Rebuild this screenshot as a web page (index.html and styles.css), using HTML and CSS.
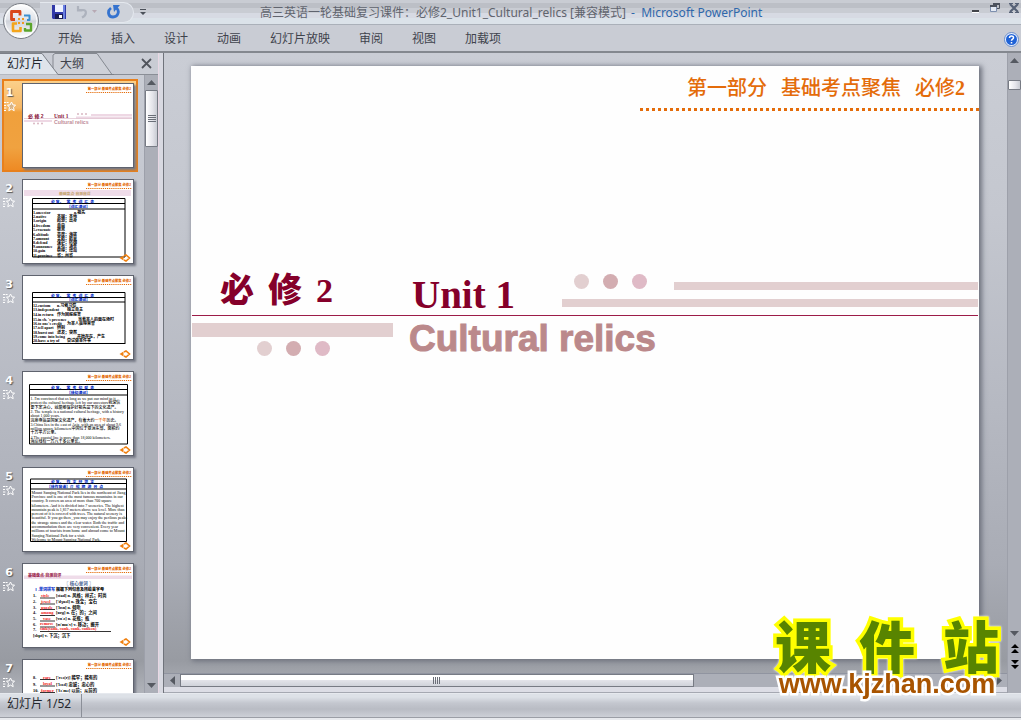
FILE: index.html
```html
<!DOCTYPE html>
<html lang="zh-CN">
<head>
<meta charset="utf-8">
<title>高三英语一轮基础复习课件 - Microsoft PowerPoint</title>
<link rel="stylesheet" href="styles.css">
</head>
<body>
<svg class="defs" width="0" height="0" aria-hidden="true">
  <defs>
    <symbol id="slide-head" viewBox="0 0 110 83" overflow="visible">
      <text x="108" y="5.6" text-anchor="end" font-size="3.3" font-weight="900" fill="#e46c0a">第一部分 基础考点聚焦 必修2</text>
      <path d="M63 8.5H109" stroke="#e46c0a" stroke-width="1.2" stroke-dasharray="1.2 .9"/>
    </symbol>
    <symbol id="slide-nav" viewBox="0 0 12 8">
      <path d="M4.500 1.500V6.500L.5 4z" fill="#f08010"/>
      <path d="M5 2 7 1l3.500 3L7 7 5 6" fill="none" stroke="#f08010" stroke-width="1.600"/>
    </symbol>
    <symbol id="anim-star" viewBox="0 0 12 11">
      <path d="M7.500 1 9 4h2.500L9.500 6.300l.7 3.400-2.700-1.600-2.700 1.600.7-3.400-2-2.300H6z" fill="#a9adb7" fill-opacity=".4" stroke="#fff"/>
      <path d="M0 1.500h5M0 4.500h2.500M0 7h3M0 9.500h2.500" stroke="#fff" stroke-dasharray="2 .6"/>
    </symbol>
  </defs>
</svg>

<div class="app">
  <header class="titlebar">
    <div class="qat">
      <button aria-label="保存"><svg width="14" height="14" viewBox="0 0 14 14"><path d="M0 0h14v14H1l-1-1z" fill="#3038a8"/><path d="M3 0h8v7H3z" fill="#eef2ff"/><path d="M11 0h2v14h-2z" fill="#6a80e0"/><path d="M3 9h8v5H3z" fill="#181c50"/><path d="M7 10h3v3H7z" fill="#fff"/></svg></button>
      <button aria-label="撤消"><svg width="23" height="14" viewBox="0 0 23 14"><path d="M2 5h6c4 0 4 5-1 7.500M3 1v4.500h4.500" fill="none" stroke="#adb2bd" stroke-width="2.200"/><path d="M17 5h5l-2.500 3z" fill="#b8a9b4"/></svg></button>
      <button aria-label="重复"><svg width="14" height="14" viewBox="0 0 14 14"><path d="M4 3C0 6 1 12 6 12s7-6 3.500-9" fill="none" stroke="#3573cf" stroke-width="2.800"/><path d="M6 0h7L7 7z" fill="#3573cf"/></svg></button>
    </div>
    <button class="qat-more" aria-label="自定义快速访问工具栏"><svg width="6" height="6" viewBox="0 0 6 6"><path d="M0 0h6v1H0zM0 3h6L3 6z" fill="#4c515a"/></svg></button>
    <h1 class="title">高三英语一轮基础复习课件：必修2_Unit1_Cultural_relics [兼容模式] <span class="app-name">- &nbsp;Microsoft PowerPoint</span></h1>
    <div class="window-buttons">
      <button aria-label="最小化"><svg width="8" height="10" viewBox="0 0 8 10"><path d="M0 7h7v2H0z" fill="#42444a"/><path d="M0 9h7v1H0z" fill="#fff"/></svg></button>
      <button aria-label="还原"><svg width="10" height="10" viewBox="0 0 10 10"><path d="M3.500 3V.5h6v5H7" fill="none" stroke="#4c525e"/><path d="M3 0h7v2H3zM0 2h7v2H0z" fill="#4c525e"/><path d="M.5 4v4.500h6V4" fill="#e4eaf4" stroke="#7d8fae"/></svg></button>
      <button aria-label="关闭"><svg width="10" height="10" viewBox="0 0 10 10"><path d="m1 1 8 8M9 1 1 9" stroke="#566176" stroke-width="2.200"/><path d="M0 .5h4M6 .5h4M0 9.500h4M6 9.500h4" stroke="#566176"/></svg></button>
    </div>
  </header>
  <button class="office" aria-label="Office 按钮"><svg viewBox="0 0 38 38" width="38" height="38">
    <defs><linearGradient id="orb" x2="0" y2="1"><stop offset="0" stop-color="#fff"/><stop offset=".45" stop-color="#e1e4ea"/><stop offset=".5" stop-color="#cfd3da"/><stop offset="1" stop-color="#fff"/></linearGradient></defs>
    <circle cx="19" cy="19" r="17.500" fill="url(#orb)" stroke="#777b83"/><circle cx="19" cy="19" r="16" fill="none" stroke="#fff"/>
    <g fill="none" stroke-linejoin="round"><path d="M13 17.500H9.500V9.500H18v4" stroke="#d9481c" stroke-width="2.800"/><path d="M22 13.500h5.500V18H25" stroke="#3c8fd0" stroke-width="2"/><path d="M15 21.500h-4V29h7.500v-4" stroke="#f4a51c" stroke-width="2.600"/><path d="M24 22h5v6.500h-6V26" stroke="#5ba52c" stroke-width="2.400"/></g>
    <g fill="#f19a20"><path d="M16 16h2v2h-2zM20 16h2v2h-2zM16 20h2v2h-2zM20 20h2v2h-2z"/></g></svg></button>

  <nav class="ribbon">
    <button>开始</button><button>插入</button><button>设计</button><button>动画</button><button>幻灯片放映</button><button>审阅</button><button>视图</button><button>加载项</button>
    <button class="help" aria-label="帮助"><svg width="15" height="15" viewBox="0 0 15 15"><circle cx="7.500" cy="7.500" r="7" fill="#e6efff" stroke="#6a8cc8"/><circle cx="7.500" cy="7.500" r="5.500" fill="#1f62d6"/><path d="M5.500 6c0-2.600 4-2.600 4-.3 0 1.500-2 1.400-2 3M7.500 10v1.500" fill="none" stroke="#fff" stroke-width="1.500"/></svg></button>
  </nav>

  <div class="work">
    <aside class="pane">
      <div class="pane-tabs">
        <svg class="tab-shape" width="114" height="22" viewBox="0 0 114 22" aria-hidden="true"><path d="M53 21V2l2-1.500h42L112 21.500" fill="#ced1d8" stroke="#858991"/><path d="M0 .5h42L58 21.500H0z" fill="#dfe4eb"/><path d="M0 .5h42L58 21.500h56" fill="none" stroke="#7c8088"/></svg>
        <button class="tab active">幻灯片</button><button class="tab">大纲</button>
        <button class="pane-close" aria-label="关闭窗格"><svg width="11" height="11" viewBox="0 0 11 11"><path d="m1 1 9 9M10 1l-9 9" stroke="#50545c" stroke-width="1.800"/></svg></button>
      </div>
      <div class="pane-body">
        <ol class="thumbs">
          <li class="item selected"><div class="label"><b>1</b><svg width="12" height="11"><use href="#anim-star"/></svg></div>
            <svg class="thumb" viewBox="0 0 110 83"><use href="#slide-head" width="110" height="83"/>
              <g fill="#eed8e4"><path d="M68 30h41v2H68zM53 32.500h56v2H53zM1 36h28v2H1z"/></g>
              <path d="M1 34.500h108" stroke="#d9b3c4" stroke-width=".6"/>
              <text x="5" y="33.500" font-size="5" font-weight="900" fill="#8b1a3c">必 修 2</text>
              <text class="serif" x="31" y="33.500" font-size="5.500" font-weight="700" fill="#8b1a3c">Unit 1</text>
              <text x="31" y="40" font-size="5.200" font-weight="700" fill="#c08c98">Cultural relics</text>
              <g fill="#d9b7c2"><circle cx="55" cy="30" r="1"/><circle cx="59" cy="30" r="1"/><circle cx="63" cy="30" r="1"/><circle cx="11" cy="39.500" r="1"/><circle cx="15" cy="39.500" r="1"/><circle cx="19" cy="39.500" r="1"/></g>
            </svg></li>
          <li class="item"><div class="label"><b>2</b><svg width="12" height="11"><use href="#anim-star"/></svg></div>
            <svg class="thumb" viewBox="0 0 110 83"><use href="#slide-head" width="110" height="83"/>
              <path d="M1 10h107v6H1z" fill="#efdce9"/><text x="36" y="14.500" font-size="3.800" font-weight="900" fill="#c8a878">基础盘点·自测自评</text>
              <path d="M9.500 18.500h92.500v58.500H9.500zM9.500 23.500H102M9.500 29H102" fill="none" stroke="#000"/>
              <g font-weight="900" fill="#0a32c8"><text x="28" y="22.500" font-size="3.800">必 背、&#160; &#160;常 &#160;考 &#160;词 &#160;汇 &#160;表</text><text x="44" y="27.800" font-size="3.800">【词汇速记】</text></g>
              <g class="rows" font-size="4">
                <text x="10" y="33.500">1.ancestor</text><text x="51" y="33.500">n.祖先</text>
                <text x="10" y="37.500">2.native</text><text x="34" y="37.500">本国；本地</text>
                <text x="10" y="41.500">3.origin</text><text x="34" y="41.500">起源；出身</text>
                <text x="10" y="46.500">4.freedom</text><text x="34" y="46.500">自由</text>
                <text x="10" y="50.500">5.evacuate</text><text x="34" y="50.500">撤离</text>
                <text x="10" y="55.500">6.altitude</text><text x="34" y="55.500">高度；海拔</text>
                <text x="10" y="59.500">7.amount</text><text x="34" y="59.500">总数；数量</text>
                <text x="10" y="63.500">8.defend</text><text x="34" y="63.500">保护；防御</text>
                <text x="10" y="68">9.announce</text><text x="34" y="68">宣布；通告</text>
                <text x="10" y="72">10.gain</text><text x="34" y="72">获得；增加</text>
                <text x="10" y="76.500">11.province</text><text x="34" y="76.500">省；州省</text>
              </g><use href="#slide-nav" x="96" y="74" width="12" height="8"/>
            </svg></li>
          <li class="item"><div class="label"><b>3</b><svg width="12" height="11"><use href="#anim-star"/></svg></div>
            <svg class="thumb" viewBox="0 0 110 83"><use href="#slide-head" width="110" height="83"/>
              <path d="M9.500 16.500h92.500V68M9.500 16.500V68M9 67.500h93M9.500 21.500H102M9.500 26H102" fill="none" stroke="#000"/>
              <g font-weight="900" fill="#0a32c8"><text x="28" y="20.500" font-size="3.800">必 背、&#160; &#160;常 &#160;考 &#160;词 &#160;汇 &#160;表</text><text x="44" y="25.200" font-size="3.800">【词汇速记】</text></g>
              <g class="rows" font-size="4">
                <text x="10" y="31">12.custom</text><text x="34" y="31">n.习俗习惯</text>
                <text x="10" y="35">13.independent</text><text x="44" y="35">独立自主</text>
                <text x="10" y="39.500">14.in return</text><text x="34" y="39.500">作为回报报答</text>
                <text x="10" y="44.500">15.in sb. 's presence</text><text x="55" y="44.500">当着某人的面在场时</text>
                <text x="10" y="48.500">16.to one's credit</text><text x="44" y="48.500">为某人赢得荣誉</text>
                <text x="10" y="53">17.tell apart</text><text x="34" y="53">辨别</text>
                <text x="10" y="57.500">18.burst out</text><text x="34" y="57.500">迸发；突然</text>
                <text x="10" y="61.500">19.come into being</text><text x="54" y="61.500">开始存在，产生</text>
                <text x="10" y="66">20.have a try of</text><text x="44" y="66">尝试做某件事</text>
              </g><use href="#slide-nav" x="96" y="74" width="12" height="8"/>
            </svg></li>
          <li class="item"><div class="label"><b>4</b><svg width="12" height="11"><use href="#anim-star"/></svg></div>
            <svg class="thumb" viewBox="0 0 110 83"><use href="#slide-head" width="110" height="83"/>
              <path d="M6.500 12.500h98v59.500h-98zM6.500 17.500h98M6.500 23h98" fill="none" stroke="#000"/>
              <g font-weight="900" fill="#0a32c8"><text x="28" y="16.500" font-size="3.800">必 背、&#160; &#160;常 &#160;考 &#160;句 &#160;型 &#160;表</text><text x="44" y="21.800" font-size="3.800">【佳句速记】</text></g>
              <g class="rows prose" font-size="4">
                <text x="7.500" y="28">1. I'm convinced that as long as we put our mind to it,</text>
                <text x="7.500" y="32">protect the cultural heritage left by our ancestors我深信</text>
                <text x="7.500" y="36.500">要下定决心，就能够保护好祖先留下的文化遗产。</text>
                <text x="7.500" y="41">2. The temple is a national cultural heritage, with a history</text>
                <text x="7.500" y="45">about 1,000 years.</text>
                <text x="7.500" y="49.500">这座寺庙是国家文化遗产，有着大约<tspan fill="#e46c0a">一千年</tspan>历史。</text>
                <text x="7.500" y="53.500">3.China lies in the east of Asia, with an area of about 9.6</text>
                <text x="7.500" y="57.500">million square kilometers中国位于亚洲东部，面积约</text>
                <text x="7.500" y="62">十万平方公里。</text>
                <text x="7.500" y="66.500">4.The coastal line is more than 18,000 kilometers.</text>
                <text x="7.500" y="71">海岸线有一万八千多公里长。</text>
              </g><use href="#slide-nav" x="96" y="74" width="12" height="8"/>
            </svg></li>
          <li class="item"><div class="label"><b>5</b><svg width="12" height="11"><use href="#anim-star"/></svg></div>
            <svg class="thumb" viewBox="0 0 110 83"><use href="#slide-head" width="110" height="83"/>
              <path d="M7.500 11h96v62.500h-96zM7.500 15.500h96M7.500 21h96" fill="none" stroke="#000"/>
              <g font-weight="900" fill="#0a32c8"><text x="28" y="14.800" font-size="3.800">必 背、&#160; &#160;作 &#160;文 &#160;好 &#160;范 &#160;文</text><text x="24" y="20" font-size="3.800">【佳作背诵】介 &#160;绍 &#160;旅 &#160;游 &#160;景 &#160;点</text></g>
              <g class="rows prose" font-size="4">
                <text x="8.500" y="25.500">Mount Sanqing National Park lies in the northeast of Jiang</text>
                <text x="8.500" y="29.500">Province and is one of the most famous mountains in our</text>
                <text x="8.500" y="33.500">country. It covers an area of more than 700 square</text>
                <text x="8.500" y="38.500">kilometers. And it is divided into 7 sceneries. The highest</text>
                <text x="8.500" y="42.500">mountain peak is 1,817 meters above sea level. More than</text>
                <text x="8.500" y="47">percent of it is covered with trees. The natural scenery is</text>
                <text x="8.500" y="51">beautiful. If you go there, you may enjoy the perilous peaks</text>
                <text x="8.500" y="55.500">the strange stones and the clear water. Both the traffic and</text>
                <text x="8.500" y="60">accommodation there are very convenient. Every year</text>
                <text x="8.500" y="64">millions of tourists from home and abroad come to Mount</text>
                <text x="8.500" y="68.500">Sanqing National Park for a visit.</text>
                <text x="8.500" y="72.500">Welcome to Mount Sanqing National Park.</text>
              </g><use href="#slide-nav" x="96" y="74" width="12" height="8"/>
            </svg></li>
          <li class="item"><div class="label"><b>6</b><svg width="12" height="11"><use href="#anim-star"/></svg></div>
            <svg class="thumb" viewBox="0 0 110 83"><use href="#slide-head" width="110" height="83"/>
              <path d="M1 11.500h108v3.500H1z" fill="#efdce9"/><text x="5" y="13.200" font-size="4" font-weight="900" fill="#9c2850">基础盘点·自测自评</text>
              <text x="41" y="20.500" font-size="4.500" font-weight="700" fill="#476090">〖 核心单词 〗</text>
              <text x="11" y="26.500" font-size="4" font-weight="900" fill="#0a32c8">Ⅰ.单词拼写</text><text x="33" y="26.500" font-size="4" font-weight="900">根据下列句意及所给首字母</text>
              <path d="M17 34h15M17 40h15M17 45.500h15M17 51.500h15M17 57h15M17 63h15M17 67.500h71" stroke="#000" stroke-width=".8"/>
              <g class="rows" font-size="4.300">
                <text x="10" y="33">1.</text><text x="33" y="33">[staɪl] n. 风格；样式；时尚</text>
                <text x="10" y="38.500">2.</text><text x="33" y="38.500">['dʒuəl] n. 珠宝；宝石</text>
                <text x="10" y="44.500">3.</text><text x="33" y="44.500">['lɪsn] n. 倾听</text>
                <text x="10" y="50">4.</text><text x="33" y="50">[ɒrg] n. 在；的；之间</text>
                <text x="10" y="56">5.</text><text x="33" y="56">[vɑːz] n. 花瓶；瓶</text>
                <text x="10" y="62">6.</text><text x="33" y="62">[rɪ'muːv] v. 移动；搬开</text>
                <text x="10" y="67">7.</text><text x="10" y="73">[slɪpt] v. 下沉；沉下</text>
              </g>
              <g class="serif" fill="#f01818" font-size="4.300" font-weight="700"><text x="18" y="32.500">style</text><text x="18" y="38.500">jewel</text><text x="18" y="44.500">puzzle</text><text x="18" y="50">among</text><text x="20" y="56">vase</text><text x="17" y="61">remove</text><text x="17" y="66">sink(sank, sunk, sunk, sunken)</text></g>
              <use href="#slide-nav" x="96" y="74" width="12" height="8"/>
            </svg></li>
          <li class="item"><div class="label"><b>7</b><svg width="12" height="11"><use href="#anim-star"/></svg></div>
            <svg class="thumb" viewBox="0 0 110 83"><use href="#slide-head" width="110" height="83"/>
              <path d="M17 19.500h15M17 26h15M17 32.500h15" stroke="#000" stroke-width=".8"/>
              <g class="rows" font-size="4.300"><text x="10" y="19">8.</text><text x="33" y="19">['reə(r)] 稀罕；稀有的</text><text x="10" y="25.500">9.</text><text x="33" y="25.500">['lɔɪəl] 忠诚；忠心的</text><text x="10" y="32">10.</text><text x="33" y="32">['fɔːmə] 以前；从前的</text></g>
              <g class="serif" fill="#f01818" font-size="4.300" font-weight="700"><text x="20" y="18.500">rare</text><text x="20" y="25">loyal</text><text x="18" y="31.500">former</text></g>
            </svg></li>
        </ol>
        <div class="vbar">
          <button aria-label="向上滚动"><svg width="9" height="5" viewBox="0 0 9 5"><path d="M4.500 0 9 5H0z" fill="#555961"/></svg></button>
          <div class="vbar-thumb"><i class="grip"></i></div>
          <button class="end" aria-label="向下滚动"><svg width="9" height="5" viewBox="0 0 9 5"><path d="M0 0h9L4.500 5z" fill="#555961"/></svg></button>
        </div>
      </div>
    </aside>
    <div class="splitter"></div>

    <main class="editor">
      <div class="stage">
        <article class="slide">
          <header class="slide-head"><p>第一部分 <span>基础考点聚焦</span> <span>必修<b>2</b></span></p></header>
          <div class="cover">
            <div class="cover-top">
              <p class="book"><span>必</span><span>修</span><span class="num">2</span></p>
              <h2>Unit 1</h2>
              <div class="deco"><div class="deco-row"><div class="dots"><i></i><i></i><i></i></div><div class="bar short"></div></div><div class="bar"></div></div>
            </div>
            <div class="cover-bottom">
              <div class="under"><div class="bar thick"></div><div class="dots"><i></i><i></i><i></i></div></div>
              <h3>Cultural relics</h3>
            </div>
          </div>
        </article>
      </div>
      <div class="hbar">
        <button aria-label="向左滚动"><svg width="5" height="9" viewBox="0 0 5 9"><path d="M5 0v9L0 4.500z" fill="#555961"/></svg></button>
        <div class="hbar-thumb"><i class="grip"></i></div>
        <button class="end" aria-label="向右滚动"><svg width="5" height="9" viewBox="0 0 5 9"><path d="M0 0v9l5-4.500z" fill="#555961"/></svg></button>
      </div>
      <div class="foot"></div>
    </main>
    <div class="vbar main-bar">
      <button aria-label="向上滚动"><svg width="9" height="5" viewBox="0 0 9 5"><path d="M4.500 0 9 5H0z" fill="#555961"/></svg></button>
      <div class="vbar-thumb"></div>
      <button class="end" aria-label="向下滚动"><svg width="9" height="5" viewBox="0 0 9 5"><path d="M0 0h9L4.500 5z" fill="#555961"/></svg></button>
      <button class="page" aria-label="上一张幻灯片"><svg width="8" height="10" viewBox="0 0 8 10"><path d="m4 0 4 4H0zM4 5l4 4H0z"/></svg></button>
      <button class="page" aria-label="下一张幻灯片"><svg width="8" height="10" viewBox="0 0 8 10"><path d="M0 0h8L4 4zM0 5h8L4 9z"/></svg></button>
    </div>
  </div>

  <footer class="status"><span>幻灯片 1/52</span></footer>
  <div class="edge"></div>
</div>

<a class="watermark" href="#"><span class="wm-name"><b>课</b><b>件</b><b>站</b></span><span class="wm-url">www.kjzhan.com</span></a>
</body>
</html>
```
FILE: styles.css
```css
* { box-sizing: border-box; }
body { margin: 0; font: 12px/16px "Noto Sans", "Noto Sans CJK SC", sans-serif; color: #3f434c; }
button { border: 0; padding: 0; margin: 0; background: none; font: inherit; color: inherit; display: flex; align-items: center; justify-content: center; }
h1, h2, h3, p, ol { margin: 0; padding: 0; }
svg { display: block; }
.defs { position: absolute; }
.app { position: relative; height: 100vh; display: flex; flex-direction: column; overflow: hidden; background: #c9ccd4; }

.titlebar { flex: 0 0 25px; display: flex; align-items: center; padding-left: 40px; border-bottom: 1px solid #aab0b9; background: linear-gradient(#c9ccd3 0 3px, #bcbfc6 3px 8px, #c9ccd3 8px 13px, #d7dae3 13px 18px, #dbe2e9 18px); }
.qat { display: flex; gap: 9px; align-items: center; width: 94px; height: 21px; padding-left: 12px; border: 1px solid #e4e8ee; border-left: 0; border-radius: 0 11px 11px 0; background: #ced2da; }
.qat-more { width: 17px; }
.title { flex: 1; padding: 2px 0 0 109px; font-size: 12px; font-weight: 400; color: #60646e; white-space: nowrap; }
.app-name { color: #2f68ac; margin-left: 2px; }
.window-buttons { display: flex; gap: 9px; padding: 0 2px 8px 0; }
.window-buttons button:first-child { margin-right: 1px; }
.office { position: absolute; left: 2px; top: 2px; }

.ribbon { flex: 0 0 28px; display: flex; align-items: center; gap: 29px; padding: 2px 2px 0 58px; border-bottom: 2px solid #84888f; background: #c9ccd4; }
.help { margin-left: auto; }

.work { flex: 1; min-height: 0; display: flex; background: linear-gradient(#cacdd5, #c4c7cf 25%, #b6b9c2 55%, #a9acb5 80%, #989ba2 95%, #b0b3ba); }
.pane { flex: 0 0 158px; display: flex; flex-direction: column; }
.pane-tabs { position: relative; flex: 0 0 22px; display: flex; align-items: center; padding-left: 7px; gap: 17px; border-bottom: 1px solid #8a8e96; background: #c9ccd4; }
.tab-shape { position: absolute; left: 0; top: 0; }
.tab { position: relative; }
.tab.active { color: #23262c; }
.pane-close { margin: 0 6px 0 auto; }
.pane-body { flex: 1; min-height: 0; display: flex; overflow: hidden; }
.thumbs { flex: 1; padding: 4px 6px 0 2px; list-style: none; overflow: hidden; }
.item { display: flex; height: 93px; margin-bottom: 3px; padding: 4px 4px 0 0; }
.item.selected { padding: 2px 2px 0 0; border: 2px solid #e8801c; background: linear-gradient(#fbd08a, #f7b866 30%, #f0a03c 35%, #f0a240 75%, #ee8a24); }
.label { width: 20px; display: flex; flex-direction: column; align-items: center; gap: 1px; padding: 2px 6px 0 0; color: #fff; font-size: 11px; line-height: 15px; text-shadow: 1px 1px 1px #555; }
.selected .label { width: 18px; padding-right: 7px; }
.label b { font-family: "DejaVu Sans", sans-serif; }
.thumb { flex: 0 0 112px; height: 85px; border: 1px solid #5f636e; background: #fff; box-shadow: 2px 2px 2px #767a86; font-family: "Liberation Sans", "Noto Sans CJK SC", sans-serif; }
.rows, .serif { font-family: "Liberation Serif", "Noto Sans CJK SC", serif; }
.rows { font-weight: 700; fill: #000; }
.rows.prose { font-weight: 500; }

.vbar { flex: 0 0 14px; display: flex; flex-direction: column; align-items: center; background: #acafb8; border-left: 1px solid #9da0aa; }
.vbar button { height: 15px; }
.vbar-thumb { width: 13px; height: 57px; border: 1px solid #777b84; border-radius: 1px; background: linear-gradient(90deg, #fff, #e4e4ea 60%, #c8cbd2); display: flex; align-items: center; justify-content: center; }
.vbar .grip { width: 8px; height: 8px; background: repeating-linear-gradient(#6a6e77 0 1px, transparent 1px 2px); }
.end { margin-top: auto; }
.splitter { flex: 0 0 6px; background: #d8d9e1; border-left: 1px solid #e8d8e4; border-right: 1px solid #6f737b; }

.editor { flex: 1; min-width: 0; display: flex; flex-direction: column; }
.stage { flex: 1; min-height: 0; padding: 13px 28px 14px 27px; display: flex; }
.slide { flex: 1; display: flex; flex-direction: column; background: #fefefe; box-shadow: 2px 1px 5px 1px #6d717d; }
.slide-head { align-self: flex-end; width: 339px; height: 45px; padding: 10px 14px 0 0; text-align: right; color: #e46c0a; font: 500 20px/24px "Liberation Serif", "Noto Sans CJK SC", serif; white-space: nowrap; background: repeating-linear-gradient(90deg, #e46c0a 0 3px, transparent 3px 6px) left bottom / 100% 3px no-repeat; }
.slide-head span { margin-left: 9px; }
.cover { margin-top: 154px; padding: 0 1px; }
.cover-top { display: flex; height: 51px; border-bottom: 1px solid #9c1c48; }
.book { flex: 0 0 220px; display: flex; gap: 14px; padding-left: 28px; color: #85002a; font: 900 34px/52px "Liberation Serif", "Noto Sans CJK SC", serif; }
.book .num { font-weight: 700; }
.cover h2 { width: 150px; color: #85002a; font: 700 39px/60px "Liberation Serif", serif; white-space: nowrap; }
.deco { flex: 1; padding-top: 9px; }
.deco-row { display: flex; height: 25px; }
.dots { display: flex; gap: 14px; padding-left: 12px; }
.dots i { width: 15px; height: 15px; border-radius: 50%; background: #e2cfd0; }
.dots i:nth-child(2) { background: #d3adb1; }
.dots i:nth-child(3) { background: #dfbac6; }
.bar { height: 8px; background: #e2cfd0; }
.bar.short { flex: 1; margin: 8px 0 0 27px; }
.bar.thick { height: 14px; margin-bottom: 4px; }
.cover-bottom { display: flex; }
.under { flex: 0 0 201px; padding-top: 7px; }
.under .dots { padding-left: 65px; }
.cover h3 { margin-left: 16px; color: #bb898b; font: 700 37px/45px "Liberation Sans", sans-serif; -webkit-text-stroke: 1px #bb898b; }

.hbar { flex: 0 0 14px; display: flex; align-items: center; background: #acafb8; border-top: 1px solid #9094a0; }
.hbar button { width: 16px; margin-top: 0; }
.hbar .end { margin-left: auto; }
.hbar-thumb { flex: 0 0 61%; height: 13px; border: 1px solid #777b84; background: linear-gradient(#fff 0 45%, #e2e3e9 50%, #d0d3da); display: flex; align-items: center; justify-content: center; }
.hbar .grip { width: 8px; height: 7px; background: repeating-linear-gradient(90deg, #6a6e77 0 1px, transparent 1px 2px); }
.foot { flex: 0 0 6px; background: #dcdde5; border-bottom: 1px solid #a5a8b1; }
.main-bar { flex-basis: 12px; }
.main-bar .vbar-thumb { height: 10px; margin-top: 12px; }
.main-bar .page { height: 16px; }
.main-bar .page:last-child { margin-bottom: 20px; }

.status { flex: 0 0 24px; display: flex; align-items: stretch; border-top: 1px solid #e6e9ee; background: linear-gradient(#dde1e7 0 3px, #c4c7cf 9px, #b9bcc4 15px, #cdd0d7); }
.status span { width: 82px; padding: 2px 0 0 7px; border-right: 1px solid #8b8f98; color: #24272d; white-space: nowrap; }
.edge { flex: 0 0 3px; background: #e8eaee; border-top: 1px solid #9b9ea6; }

.watermark { position: fixed; right: 20px; bottom: 22px; width: 228px; display: flex; flex-direction: column; align-items: center; text-decoration: none; }
.wm-name { display: flex; justify-content: space-between; width: 100%; padding: 0 2px; color: #588400; font: 900 56px/52px "Noto Sans CJK SC", sans-serif; -webkit-text-stroke: 7px #ff0; paint-order: stroke fill; filter: drop-shadow(0 0 1px #fff); }
.wm-name b { font-weight: 900; }
.wm-url { color: #a85400; font: 700 27px/28px "Liberation Sans", sans-serif; -webkit-text-stroke: 5px #fff; paint-order: stroke fill; position: relative; }
```
